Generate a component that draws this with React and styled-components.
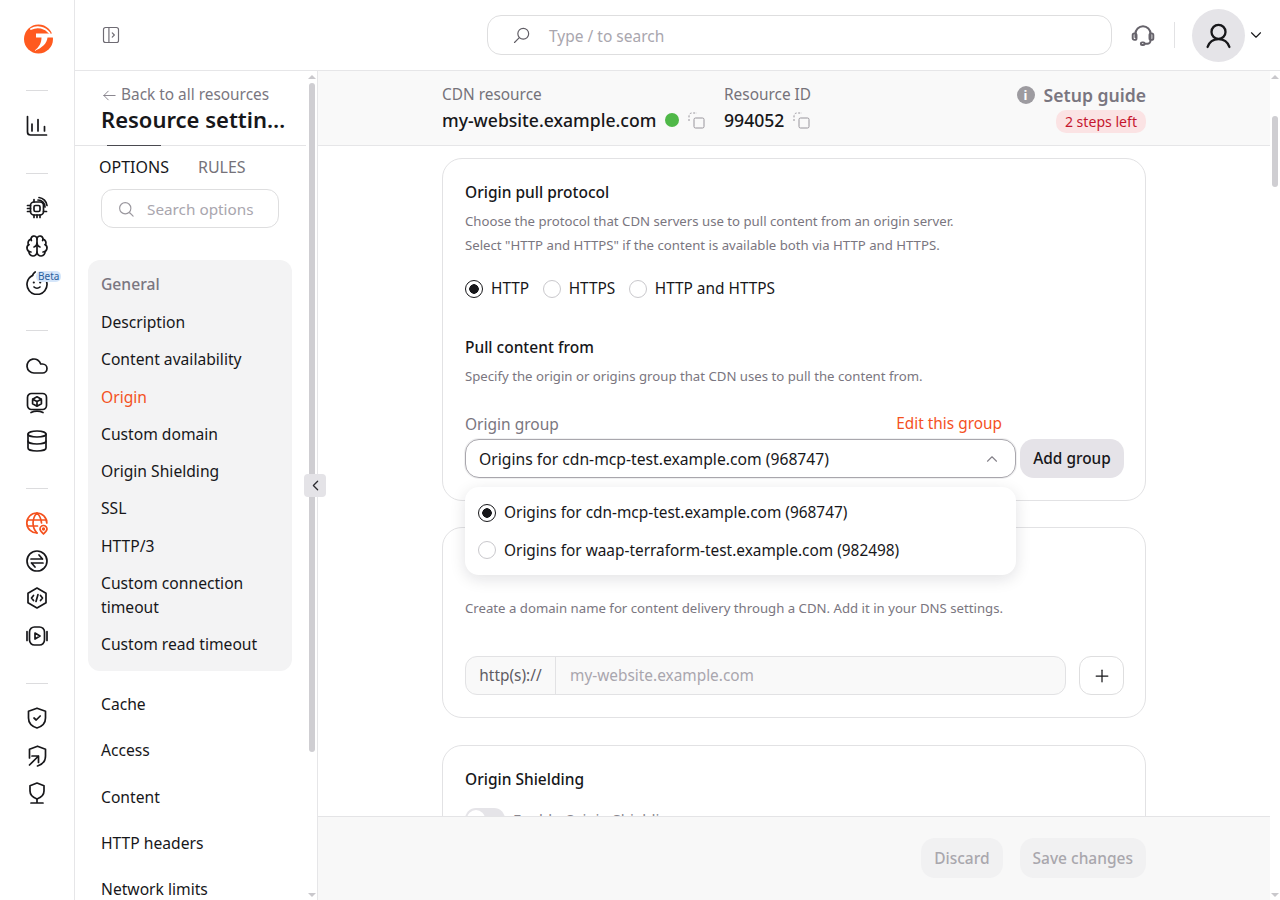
import styled, { createGlobalStyle } from "styled-components"
import { Brain, Cloud, Database, ChevronDown, ChevronUp, ChevronLeft, Plus } from "lucide-react"

const GlobalStyle = createGlobalStyle`
  html, body { margin: 0; padding: 0; background: #fff; }
  body { font-family: "Noto Sans", "Liberation Sans", sans-serif; color: #17171a; }
  * { box-sizing: border-box; }
`

const Svg = ({ children, size = 24, color = "#17171a", width = 1.7, style }) => (
  <svg width={size} height={size} viewBox="0 0 24 24" fill="none" stroke={color} strokeWidth={width} strokeLinecap="round" strokeLinejoin="round" style={style}>
    {children}
  </svg>
)

const ChartIcon = () => (
  <Svg>
    <path d="M2.5 2.5V18a3 3 0 0 0 3 3h16" />
    <path d="M7 17v-7M13 17V5.5M19.5 17v-4.5" />
  </Svg>
)
const ChipIcon = () => (
  <Svg>
    <rect x="5.5" y="6" width="13" height="13" rx="3.5" />
    <rect x="9" y="9.500" width="6" height="6" rx="1.500" />
    <path d="M2.500 9.500h3M2.500 12.500h3M2.500 15.500h3M18.500 15.500h3M9 19v2.500M12 19v2.500M15 19v2.500M9 3.500V6" />
    <path d="M13 4a7 7 0 0 1 7 7M14 1.500a9 9 0 0 1 8 8" />
  </Svg>
)
const BabyIcon = () => (
  <Svg>
    <path d="M7.500 4.500A10 10 0 1 0 16.500 4.500" />
    <path d="M7.500 4.500C8 3 9 1.800 10.200 1" />
    <path d="M9 16c1.600 1.500 4.400 1.500 6 0" />
    <path d="M8.800 11.500h.01M15.200 11.500h.01" strokeWidth="2.200" />
  </Svg>
)
const MonitorBoxIcon = () => (
  <Svg>
    <rect x="2.5" y="2.5" width="19" height="16" rx="4" />
    <path d="M12 5.800l4.400 2.400v4.600L12 15.200l-4.400-2.400V8.200zM7.600 8.200L12 10.600l4.400-2.400M12 10.600v4.600" />
    <path d="M6 21.500c3.500-1.500 8.500-1.500 12 0" />
  </Svg>
)
const GlobePinIcon = ({ color }) => (
  <Svg color={color}>
    <path d="M21.800 12A10 10 0 1 0 12 22" />
    <path d="M2.500 9h19M2.500 15h10M12 2c-5.300 5.500-5.300 14.500 0 20M12 2c3 3 4.300 6.500 4.500 10" />
    <path d="M18.500 23c-2-2-3.500-3.300-3.500-5a3.500 3.500 0 0 1 7 0c0 1.700-1.500 3-3.500 5z" fill="#fff" />
    <circle cx="18.500" cy="18" r="0.800" />
  </Svg>
)
const ExchangeIcon = () => (
  <Svg>
    <circle cx="12" cy="12" r="10" />
    <path d="M6 10h11.500M14 6l3.500 4M18 14H6.500M10 18l-3.500-4" />
  </Svg>
)
const HexCodeIcon = () => (
  <Svg>
    <path d="M12 2l9 5.200v9.600L12 22l-9-5.200V7.200z" />
    <path d="M8.500 9.500L6.500 12l2 2.500M15.500 9.500l2 2.500-2 2.500M13 8.500l-2 7" />
  </Svg>
)
const PlayFrameIcon = () => (
  <Svg>
    <rect x="4.500" y="3" width="15" height="18" rx="5" />
    <path d="M2 7.500v9M22 7.500v9" />
    <path d="M10 9l5 3-5 3z" />
  </Svg>
)
const ShieldCheckIcon = () => (
  <Svg>
    <path d="M12 2.200l8.500 3v6.800c0 5-3.700 8.500-8.500 10-4.800-1.500-8.500-5-8.500-10V5.200z" />
    <path d="M9 12l2.200 2 4-4" />
  </Svg>
)
const ShieldArrowIcon = () => (
  <Svg>
    <path d="M4.500 14V5.200L12.500 2.200l8 3V12c0 5-3.500 8.500-8 10" />
    <path d="M4.500 21L13.500 12M7 12h6.500v6.500" />
  </Svg>
)
const PinTreeIcon = () => (
  <Svg>
    <path d="M12 2l7 2.800V10c0 4-3 6.500-7 8-4-1.500-7-4-7-8V4.800z" />
    <path d="M12 18v4M6 22h12" />
  </Svg>
)
const CopyIcon = () => (
  <svg width="17" height="17" viewBox="0 0 17 17" fill="none" stroke="#98959c" strokeWidth="1">
    <rect x="6" y="6" width="10" height="10" rx="1.500" />
    <path d="M1 9V4c0-1.700 1.300-3 3-3h5" strokeDasharray="2 1.600" />
  </svg>
)
const LogoIcon = () => (
  <svg width="32" height="32" viewBox="0 0 32 32" fill="none">
    <circle cx="16.500" cy="16" r="14.500" fill="#ff5a1f" />
    <path d="M9 6C15.500 2.500 23 4.500 27.500 10" stroke="#fff" strokeWidth="1.800" strokeLinecap="round" />
    <path d="M14 10.500H32V14.500H25.500C25 20 20.500 25 12 28C17.500 24 19.500 19.500 19.500 14.500H14z" fill="#fff" />
  </svg>
)

const railGroups = [
  [<ChartIcon />],
  [<ChipIcon />, <Brain size={24} strokeWidth={1.7} />, <BabyIcon />],
  [<Cloud size={24} strokeWidth={1.7} />, <MonitorBoxIcon />, <Database size={24} strokeWidth={1.7} />],
  [<GlobePinIcon color="#f4511e" />, <ExchangeIcon />, <HexCodeIcon />, <PlayFrameIcon />],
  [<ShieldCheckIcon />, <ShieldArrowIcon />, <PinTreeIcon />],
]

const sideGroup = [
  "Description",
  "Content availability",
  "Origin",
  "Custom domain",
  "Origin Shielding",
  "SSL",
  "HTTP/3",
  "Custom connection timeout",
  "Custom read timeout",
]

const sideRest = ["Cache", "Access", "Content", "HTTP headers", "Network limits"]

const App = () => {
  return (
    <Page>
      <GlobalStyle />
      <Rail>
        <LogoSlot><LogoIcon /></LogoSlot>
        {railGroups.map((group, i) => (
          <RailGroup key={i}>
            <RailDivider />
            {group.map((icon, j) => (
              <RailSlot key={j}>
                {icon}
                {i === 1 && j === 2 && <BetaBadge>Beta</BetaBadge>}
              </RailSlot>
            ))}
          </RailGroup>
        ))}
      </Rail>
      <Shell>
        <TopBar>
          <Svg size={20} color="#6e6b73" width={1.4}>
            <rect x="3" y="3" width="18" height="18" rx="2.500" />
            <path d="M9.500 3v18M13.500 9.500l2.500 2.500-2.500 2.500" />
          </Svg>
          <GlobalSearch>
            <Svg size={20} color="#5f5c64" width={1.4} style={{ transform: "scaleX(-1)" }}>
              <circle cx="10.500" cy="10.500" r="6.500" />
              <path d="M15.500 15.500L21 21" />
            </Svg>
            <span>Type / to search</span>
          </GlobalSearch>
          <Svg size={26} color="#66636b" width={1.8} style={{ marginLeft: 18 }}>
            <path d="M5 14v-3a7 7 0 0 1 14 0v6a3 3 0 0 1-3 3h-2.500" />
            <rect x="2.500" y="10.500" width="3.500" height="6" rx="1.500" />
            <rect x="18" y="10.500" width="3.500" height="6" rx="1.500" />
            <rect x="10" y="18.800" width="3.500" height="2.400" rx="1.200" />
          </Svg>
          <TopSeparator />
          <Avatar>
            <Svg size={29} color="#17171a" width={1.9}>
              <circle cx="12" cy="9" r="5.800" />
              <path d="M3 21.500c1.300-4 4.500-6.500 9-6.500s7.700 2.500 9 6.500" />
            </Svg>
          </Avatar>
          <ChevronDown size={18} strokeWidth={1.5} color="#17171a" />
        </TopBar>
        <Body>
          <Sidebar>
            <SideHead>
              <BackLink>
                <Svg size={15} color="#7a7680" width={1.4}>
                  <path d="M21 12H3M10 5l-7 7 7 7" />
                </Svg>
                Back to all resources
              </BackLink>
              <SideTitle>Resource settings</SideTitle>
            </SideHead>
            <Tabs>
              <Tab $active>OPTIONS</Tab>
              <Tab>RULES</Tab>
            </Tabs>
            <OptionSearch>
              <Svg size={18} color="#9a979e" width={1.5}>
                <circle cx="11" cy="11" r="7.500" />
                <path d="M17 17l4.500 4.500" />
              </Svg>
              <span>Search options</span>
            </OptionSearch>
            <SideGroup>
              <SideGroupTitle>General</SideGroupTitle>
              {sideGroup.map((item) => (
                <GroupItem key={item} $active={item === "Origin"}>{item}</GroupItem>
              ))}
            </SideGroup>
            <SideList>
              {sideRest.map((item) => (
                <SideItem key={item}>{item}</SideItem>
              ))}
            </SideList>
            <SideScrollbar>
              <ScrollArrow />
              <ScrollThumb $top={4} $height={669} />
              <ScrollArrow $down />
            </SideScrollbar>
          </Sidebar>
          <SideRule />
          <CollapseHandle><ChevronLeft size={17} strokeWidth={1.8} color="#2b2b30" /></CollapseHandle>
          <Main>
            <SummaryBar>
              <SummaryInner>
                <SummaryCol $width={282}>
                  <SummaryLabel>CDN resource</SummaryLabel>
                  <SummaryValue>
                    my-website.example.com
                    <StatusDot />
                    <CopyIcon />
                  </SummaryValue>
                </SummaryCol>
                <SummaryCol>
                  <SummaryLabel>Resource ID</SummaryLabel>
                  <SummaryValue>
                    994052
                    <CopyIcon />
                  </SummaryValue>
                </SummaryCol>
                <SetupGuide>
                  <SetupTitle><InfoDot>i</InfoDot>Setup guide</SetupTitle>
                  <StepsBadge>2 steps left</StepsBadge>
                </SetupGuide>
              </SummaryInner>
            </SummaryBar>
            <Content>
              <Card>
                <CardTitle>Origin pull protocol</CardTitle>
                <CardText>
                  Choose the protocol that CDN servers use to pull content from an origin server.<br />
                  Select "HTTP and HTTPS" if the content is available both via HTTP and HTTPS.
                </CardText>
                <RadioRow>
                  <RadioLabel><Radio $checked />HTTP</RadioLabel>
                  <RadioLabel><Radio />HTTPS</RadioLabel>
                  <RadioLabel><Radio />HTTP and HTTPS</RadioLabel>
                </RadioRow>
                <CardTitle $top={34}>Pull content from</CardTitle>
                <CardText>Specify the origin or origins group that CDN uses to pull the content from.</CardText>
                <FieldHead>
                  <FieldLabel>Origin group</FieldLabel>
                  <EditLink>Edit this group</EditLink>
                </FieldHead>
                <SelectRow>
                  <SelectWrap>
                    <SelectBox>
                      Origins for cdn-mcp-test.example.com (968747)
                      <ChevronUp size={18} strokeWidth={1.5} color="#85828a" />
                    </SelectBox>
                    <Dropdown>
                      <DropItem><Radio $checked />Origins for cdn-mcp-test.example.com (968747)</DropItem>
                      <DropItem><Radio />Origins for waap-terraform-test.example.com (982498)</DropItem>
                    </Dropdown>
                  </SelectWrap>
                  <GroupButton>Add group</GroupButton>
                </SelectRow>
              </Card>
              <Card>
                <CardText $top={47}>Create a domain name for content delivery through a CDN. Add it in your DNS settings.</CardText>
                <DomainRow>
                  <DomainField>
                    <DomainPrefix>http(s)://</DomainPrefix>
                    <DomainInput>my-website.example.com</DomainInput>
                  </DomainField>
                  <PlusButton><Plus size={20} strokeWidth={1.5} color="#17171a" /></PlusButton>
                </DomainRow>
              </Card>
              <Card>
                <CardTitle>Origin Shielding</CardTitle>
                <ToggleRow>
                  <Toggle />
                  <ToggleLabel>Enable Origin Shielding</ToggleLabel>
                </ToggleRow>
              </Card>
            </Content>
            <Footer>
              <FooterInner>
                <FooterButton>Discard</FooterButton>
                <FooterButton>Save changes</FooterButton>
              </FooterInner>
            </Footer>
          </Main>
          <MainScrollbar>
            <ScrollArrow />
            <ScrollThumb $top={37} $height={71} />
            <ScrollArrow $down />
          </MainScrollbar>
        </Body>
      </Shell>
    </Page>
  )
}

const Page = styled.div`
  display: flex;
  width: 1280px;
  height: 900px;
  overflow: hidden;
  background: #fff;
`
const Rail = styled.nav`
  flex: 0 0 75px;
  display: flex;
  flex-direction: column;
  align-items: center;
  border-right: 1px solid #e6e6e8;
`
const LogoSlot = styled.div`
  height: 62px;
  width: 100%;
  padding: 23px 0 0 2px;
  display: flex;
  justify-content: center;
  align-items: flex-start;
`
const RailGroup = styled.div`
  width: 100%;
  display: flex;
  flex-direction: column;
  align-items: center;
`
const RailDivider = styled.div`
  width: 22px;
  height: 1px;
  margin: 28px 0 16px;
  background: #dcdcde;
`
const RailSlot = styled.div`
  position: relative;
  height: 37.500px;
  width: 100%;
  display: flex;
  align-items: center;
  justify-content: center;
  color: #17171a;
`
const BetaBadge = styled.span`
  position: absolute;
  left: 36px;
  top: 6px;
  padding: 0 2px;
  font-size: 10px;
  line-height: 11px;
  color: #2a5f9e;
  background: #d5e6fa;
  border-radius: 5px;
`
const Shell = styled.div`
  flex: 1;
  min-width: 0;
  display: flex;
  flex-direction: column;
`
const TopBar = styled.header`
  flex: 0 0 71px;
  display: flex;
  align-items: center;
  padding-left: 26px;
  border-bottom: 1px solid #e6e6e8;
`
const GlobalSearch = styled.div`
  width: 625px;
  height: 40px;
  margin-left: 366px;
  padding-left: 24px;
  display: flex;
  align-items: center;
  gap: 17px;
  border: 1px solid #dededf;
  border-radius: 14px;
  font-size: 15.500px;
  color: #a9a6ae;
  span { position: relative; top: 1px; }
`
const TopSeparator = styled.div`
  width: 1px;
  height: 26px;
  margin: 0 17px 0 18px;
  background: #e2e2e4;
`
const Avatar = styled.div`
  width: 53px;
  height: 53px;
  margin-right: 2px;
  border-radius: 50%;
  background: #e5e4e8;
  display: flex;
  align-items: center;
  justify-content: center;
`
const Body = styled.div`
  position: relative;
  flex: 1;
  min-height: 0;
  display: flex;
`
const Sidebar = styled.aside`
  position: relative;
  flex: 0 0 242px;
  overflow: hidden;
  background: #fff;
`
const SideRule = styled.div`
  flex: 0 0 1px;
  background: #e6e6e8;
`
const SideHead = styled.div`
  width: 231px;
  height: 75px;
  padding: 13px 0 0 27px;
  border-bottom: 1px solid #e4e4e6;
`
const BackLink = styled.div`
  display: flex;
  align-items: center;
  gap: 4px;
  font-size: 15.400px;
  line-height: 22px;
  color: #7a7680;
`
const SideTitle = styled.h1`
  width: 185px;
  margin: -1px 0 0 -1px;
  font-size: 22px;
  line-height: 28px;
  font-weight: 600;
  color: #17171a;
  white-space: nowrap;
  overflow: hidden;
  text-overflow: ellipsis;
`
const Tabs = styled.div`
  display: flex;
  gap: 29px;
  padding: 9px 0 0 24px;
`
const Tab = styled.div`
  position: relative;
  font-size: 16px;
  line-height: 24px;
  color: ${(p) => (p.$active ? "#17171a" : "#75727a")};
  &::before {
    content: "";
    display: ${(p) => (p.$active ? "block" : "none")};
    position: absolute;
    left: 8px;
    right: 8px;
    top: -10px;
    height: 1px;
    background: #4a4a50;
  }
`
const OptionSearch = styled.div`
  width: 178px;
  height: 39px;
  margin: 10px 0 0 26px;
  padding-left: 15px;
  display: flex;
  align-items: center;
  gap: 12px;
  border: 1px solid #dededf;
  border-radius: 12px;
  font-size: 15.300px;
  color: #a9a6ae;
`
const SideGroup = styled.div`
  width: 204px;
  margin: 32px 0 0 13px;
  padding: 12px 13px 14.500px;
  background: #f3f3f4;
  border-radius: 12px;
`
const SideGroupTitle = styled.div`
  font-size: 15.650px;
  line-height: 24px;
  font-weight: 500;
  color: #7a7680;
  margin-bottom: 14px;
`
const GroupItem = styled.div`
  font-size: 15.650px;
  line-height: 24px;
  margin-bottom: 13.300px;
  color: ${(p) => (p.$active ? "#f4511e" : "#17171a")};
  &:last-child { margin-bottom: 0; }
`
const SideList = styled.div`
  padding: 21px 0 0 26px;
`
const SideItem = styled.div`
  font-size: 15.650px;
  line-height: 24px;
  margin-bottom: 22.400px;
  white-space: nowrap;
`
const SideScrollbar = styled.div`
  position: absolute;
  top: 0;
  right: 0;
  bottom: 0;
  width: 10px;
`
const MainScrollbar = styled.div`
  position: relative;
  flex: 0 0 10px;
`
const ScrollArrow = styled.div`
  position: absolute;
  left: 1px;
  ${(p) => (p.$down ? "bottom: 3px;" : "top: 4px;")}
  width: 0;
  height: 0;
  border-left: 4px solid transparent;
  border-right: 4px solid transparent;
  ${(p) => (p.$down ? "border-top: 4px solid #c9c8cc;" : "border-bottom: 4px solid #c9c8cc;")}
`
const ScrollThumb = styled.div`
  position: absolute;
  left: 2px;
  width: 6px;
  top: ${(p) => p.$top + 8}px;
  height: ${(p) => p.$height}px;
  border-radius: 3px;
  background: #cfced2;
`
const CollapseHandle = styled.div`
  position: absolute;
  z-index: 8;
  top: 403px;
  left: 229px;
  width: 22px;
  height: 23px;
  display: flex;
  align-items: center;
  justify-content: center;
  background: #e4e3e7;
  border-radius: 4px;
`
const Main = styled.main`
  position: relative;
  flex: 1;
  min-width: 0;
  display: flex;
  flex-direction: column;
`
const SummaryBar = styled.div`
  flex: 0 0 75px;
  background: #f9f9f9;
  border-bottom: 1px solid #e6e6e8;
`
const SummaryInner = styled.div`
  width: 704px;
  margin: 0 auto;
  display: flex;
  padding-top: 13px;
`
const SummaryCol = styled.div`
  width: ${(p) => (p.$width ? `${p.$width}px` : "auto")};
`
const SummaryLabel = styled.div`
  font-size: 15.400px;
  line-height: 22px;
  color: #75727a;
`
const SummaryValue = styled.div`
  display: flex;
  align-items: center;
  font-size: 17.600px;
  line-height: 28px;
  font-weight: 500;
  color: #17171a;
  svg { margin-left: 9px; }
`
const StatusDot = styled.i`
  width: 14px;
  height: 14px;
  margin-left: 9px;
  border-radius: 50%;
  background: #4fb848;
`
const SetupGuide = styled.div`
  margin: -1px 0 0 auto;
  display: flex;
  flex-direction: column;
  align-items: flex-end;
`
const SetupTitle = styled.div`
  display: flex;
  align-items: center;
  gap: 9px;
  font-size: 17.600px;
  line-height: 24px;
  font-weight: 600;
  color: #7a7680;
`
const InfoDot = styled.span`
  width: 18px;
  height: 18px;
  border-radius: 50%;
  background: #9d9ba0;
  color: #fff;
  font-size: 13px;
  line-height: 18px;
  font-weight: 700;
  text-align: center;
`
const StepsBadge = styled.div`
  margin-top: 3px;
  padding: 0 9px;
  height: 23px;
  font-size: 14.100px;
  line-height: 23px;
  color: #c5162e;
  background: #fbe3e4;
  border-radius: 10px;
`
const Content = styled.div`
  flex: 1;
  min-height: 0;
  overflow: hidden;
  padding-top: 12px;
  display: flex;
  flex-direction: column;
  gap: 26.400px;
  align-items: center;
`
const Card = styled.section`
  flex: none;
  width: 704px;
  padding: 21px 21px 22px 22px;
  border: 1px solid #e2e2e4;
  border-radius: 20px;
  background: #fff;
`
const CardTitle = styled.h3`
  margin: ${(p) => p.$top || 0}px 0 0;
  font-size: 15.500px;
  line-height: 24px;
  font-weight: 500;
  color: #17171a;
`
const CardText = styled.p`
  margin: ${(p) => p.$top || 5}px 0 0;
  font-size: 13.200px;
  line-height: 24px;
  color: #7a7680;
`
const RadioRow = styled.div`
  display: flex;
  gap: 13.500px;
  margin-top: 20px;
`
const RadioLabel = styled.label`
  display: flex;
  align-items: center;
  gap: 8px;
  font-size: 15.400px;
  line-height: 24px;
  color: #17171a;
`
const Radio = styled.span`
  flex: none;
  width: 18px;
  height: 18px;
  border-radius: 50%;
  border: 1px solid ${(p) => (p.$checked ? "#17171a" : "#c9c8cc")};
  background: ${(p) => (p.$checked ? "radial-gradient(circle, #17171a 0 4.500px, #fff 5px)" : "#fff")};
`
const FieldHead = styled.div`
  display: flex;
  justify-content: space-between;
  width: 537px;
  margin-top: 24px;
`
const FieldLabel = styled.span`
  font-size: 15.500px;
  line-height: 24px;
  color: #7a7680;
`
const EditLink = styled.span`
  font-size: 15.400px;
  line-height: 24px;
  color: #f4511e;
`
const SelectRow = styled.div`
  display: flex;
  gap: 4px;
  margin-top: 3px;
`
const SelectWrap = styled.div`
  position: relative;
  width: 551px;
`
const SelectBox = styled.div`
  height: 39px;
  padding: 0 14px 0 13px;
  display: flex;
  align-items: center;
  justify-content: space-between;
  font-size: 15.700px;
  color: #17171a;
  background: #fff;
  border: 1px solid #a9a7ad;
  border-radius: 14px;
  box-shadow: 0 0 0 1px #f0f0f1;
`
const Dropdown = styled.div`
  position: absolute;
  z-index: 5;
  top: 48px;
  left: 0;
  right: 0;
  height: 88px;
  padding: 7px 13px;
  background: #fff;
  border-radius: 14px;
  box-shadow: 0 4px 16px rgba(20, 20, 30, 0.12);
`
const DropItem = styled.div`
  height: 37.500px;
  display: flex;
  align-items: center;
  gap: 8px;
  font-size: 15.400px;
  color: #17171a;
`
const GroupButton = styled.div`
  width: 104px;
  height: 39px;
  display: flex;
  align-items: center;
  justify-content: center;
  font-size: 15.400px;
  font-weight: 500;
  color: #17171a;
  background: #e5e3e8;
  border-radius: 14px;
`
const DomainRow = styled.div`
  display: flex;
  gap: 13px;
  margin-top: 36px;
`
const DomainField = styled.div`
  width: 601px;
  height: 39px;
  display: flex;
  align-items: stretch;
  background: #f9f9f9;
  border: 1px solid #e2e2e4;
  border-radius: 12px;
  font-size: 15.400px;
`
const DomainPrefix = styled.span`
  width: 90px;
  display: flex;
  align-items: center;
  justify-content: center;
  color: #5f5c64;
  border-right: 1px solid #e2e2e4;
`
const DomainInput = styled.span`
  display: flex;
  align-items: center;
  padding-left: 14px;
  color: #a9a6ae;
`
const PlusButton = styled.div`
  width: 45px;
  height: 39px;
  display: flex;
  align-items: center;
  justify-content: center;
  border: 1px solid #dededf;
  border-radius: 12px;
`
const ToggleRow = styled.div`
  display: flex;
  align-items: center;
  gap: 8px;
  margin-top: 17px;
`
const Toggle = styled.div`
  width: 40px;
  height: 22px;
  border-radius: 11px;
  background: #e5e4e8;
  display: flex;
  align-items: center;
  padding-left: 2px;
  &::before {
    content: "";
    width: 18px;
    height: 18px;
    border-radius: 50%;
    background: #fff;
  }
`
const ToggleLabel = styled.span`
  font-size: 15px;
  color: #8a878f;
`
const Footer = styled.footer`
  flex: 0 0 84px;
  position: relative;
  z-index: 6;
  background: #f8f8f8;
  border-top: 1px solid #e4e4e6;
`
const FooterInner = styled.div`
  width: 704px;
  margin: 0 auto;
  padding-top: 21px;
  display: flex;
  justify-content: flex-end;
  gap: 17px;
`
const FooterButton = styled.div`
  height: 40px;
  padding: 0 13px;
  display: flex;
  align-items: center;
  font-size: 15.500px;
  font-weight: 500;
  color: #a9a7ad;
  background: #f1f1f2;
  border-radius: 14px;
`

export default App
